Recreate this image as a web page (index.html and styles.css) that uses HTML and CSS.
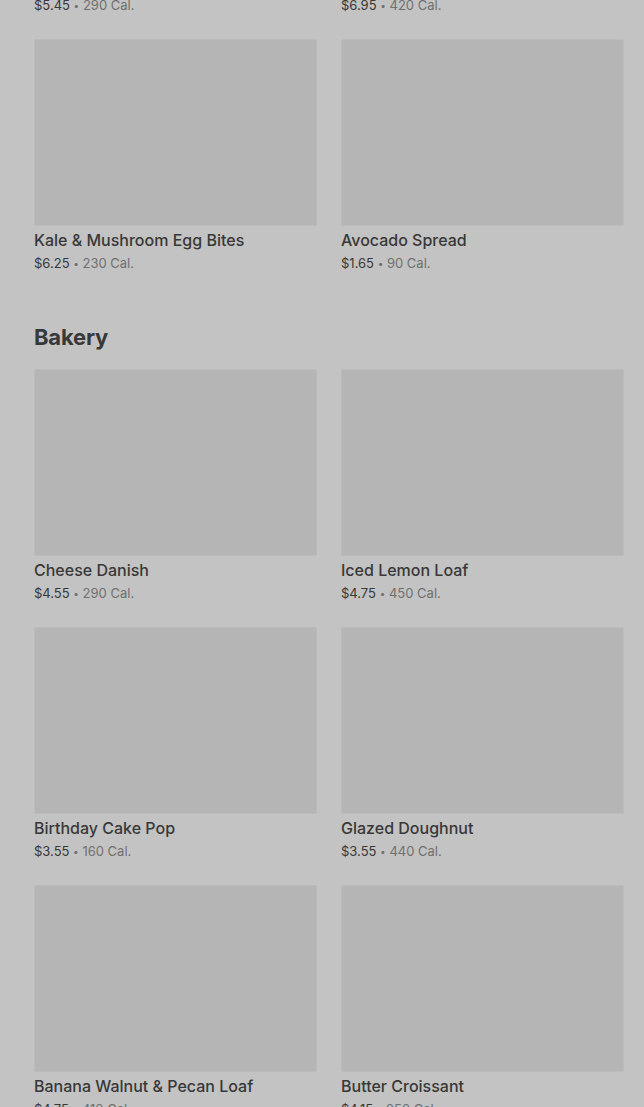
FILE: index.html
```html
<!DOCTYPE html>
<html lang="en">

<head>
    <meta charset="UTF-8">
    <meta name="viewport" content="width=device-width, initial-scale=1.0">
    <title>Menu</title>
    <link rel="stylesheet" href="styles.css">
</head>

<body>
    <div class="menu-page">
        <!-- Hot breakfast (scrolled) -->
        <section class="menu-section">
            <div class="product-grid">
                <div class="product-card">
                    <div class="product-image"></div>
                    <div class="product-name">Spinach, Feta &amp; Egg White Wrap</div>
                    <div class="product-meta"><span class="price">$5.45</span> <span class="dot">•</span> 290 Cal.</div>
                </div>
                <div class="product-card">
                    <div class="product-image"></div>
                    <div class="product-name">Impossible Breakfast Sandwich</div>
                    <div class="product-meta"><span class="price">$6.95</span> <span class="dot">•</span> 420 Cal.</div>
                </div>
                <div class="product-card">
                    <div class="product-image"></div>
                    <div class="product-name">Kale &amp; Mushroom Egg Bites</div>
                    <div class="product-meta"><span class="price">$6.25</span> <span class="dot">•</span> 230 Cal.</div>
                </div>
                <div class="product-card">
                    <div class="product-image"></div>
                    <div class="product-name">Avocado Spread</div>
                    <div class="product-meta"><span class="price">$1.65</span> <span class="dot">•</span> 90 Cal.</div>
                </div>
            </div>
        </section>

        <!-- Bakery -->
        <section class="menu-section">
            <h2 class="section-title">Bakery</h2>
            <div class="product-grid">
                <div class="product-card">
                    <div class="product-image"></div>
                    <div class="product-name">Cheese Danish</div>
                    <div class="product-meta"><span class="price">$4.55</span> <span class="dot">•</span> 290 Cal.</div>
                </div>
                <div class="product-card">
                    <div class="product-image"></div>
                    <div class="product-name">Iced Lemon Loaf</div>
                    <div class="product-meta"><span class="price">$4.75</span> <span class="dot">•</span> 450 Cal.</div>
                </div>
                <div class="product-card">
                    <div class="product-image"></div>
                    <div class="product-name">Birthday Cake Pop</div>
                    <div class="product-meta"><span class="price">$3.55</span> <span class="dot">•</span> 160 Cal.</div>
                </div>
                <div class="product-card">
                    <div class="product-image"></div>
                    <div class="product-name">Glazed Doughnut</div>
                    <div class="product-meta"><span class="price">$3.55</span> <span class="dot">•</span> 440 Cal.</div>
                </div>
                <div class="product-card">
                    <div class="product-image"></div>
                    <div class="product-name">Banana Walnut &amp; Pecan Loaf</div>
                    <div class="product-meta"><span class="price">$4.75</span> <span class="dot">•</span> 410 Cal.</div>
                </div>
                <div class="product-card">
                    <div class="product-image"></div>
                    <div class="product-name">Butter Croissant</div>
                    <div class="product-meta"><span class="price">$4.15</span> <span class="dot">•</span> 250 Cal.</div>
                </div>
            </div>
        </section>
    </div>
</body>

</html>
```

FILE: styles.css
```css
:root {
    --page-bg: #c3c3c3;
    --image-bg: #b5b5b5;
    --image-edge: #bbbbbb;
    --text-color: #383838;
    --muted-color: #707070;
}

* {
    box-sizing: border-box;
    margin: 0;
    padding: 0;
}

body {
    font-family: Inter, 'Noto Sans', Arial, sans-serif;
    color: var(--text-color);
    background-color: var(--page-bg);
    overflow: hidden;
}

/* page is scrolled: first row sits partly above the fold */
.menu-page {
    margin-top: -219px;
    padding: 0 20px 0 34px;
}

.menu-section + .menu-section {
    margin-top: 48px;
}

.section-title {
    font-size: 22px;
    line-height: 32px;
    font-weight: 700;
    letter-spacing: -0.2px;
    margin-bottom: 16px;
}

.product-grid {
    display: grid;
    grid-template-columns: 1fr 1fr;
    column-gap: 24px;
    row-gap: 24px;
}

.product-image {
    height: 187px;
    background-color: var(--image-bg);
    border: 1px solid var(--image-edge);
    border-radius: 2px;
}

.product-name {
    margin-top: 4px;
    font-size: 16px;
    line-height: 20px;
    font-weight: 500;
}

.product-meta {
    margin-top: 4px;
    font-size: 13px;
    line-height: 18px;
    color: var(--muted-color);
}

.product-meta .price {
    color: var(--text-color);
}

.product-meta .dot {
    font-size: 10px;
    position: relative;
    top: -1px;
}
```
